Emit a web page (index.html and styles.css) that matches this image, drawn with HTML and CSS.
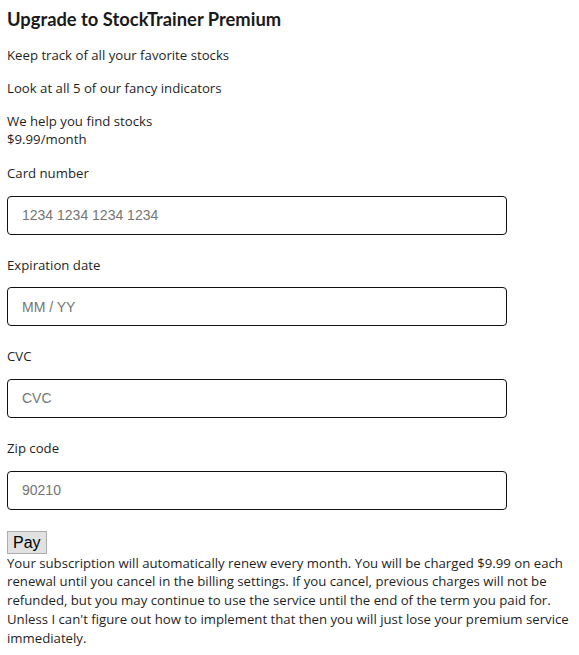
FILE: index.html
```html
<!DOCTYPE html>
<html lang="en">
<head>
<meta charset="utf-8">
<title>Upgrade to StockTrainer Premium</title>
<link rel="stylesheet" href="styles.css">
</head>
<body>
<h1 class="title">Upgrade to StockTrainer Premium</h1>
<p class="feature">Keep track of all your favorite stocks</p>
<p class="feature">Look at all 5 of our fancy indicators</p>
<p class="feature">We help you find stocks<br>$9.99/month</p>
<form class="pay-form">
  <div class="field">
    <label class="field-label" for="card">Card number</label>
    <input class="field-input" id="card" type="text" placeholder="1234 1234 1234 1234">
  </div>
  <div class="field">
    <label class="field-label" for="exp">Expiration date</label>
    <input class="field-input" id="exp" type="text" placeholder="MM / YY">
  </div>
  <div class="field">
    <label class="field-label" for="cvc">CVC</label>
    <input class="field-input" id="cvc" type="text" placeholder="CVC">
  </div>
  <div class="field">
    <label class="field-label" for="zip">Zip code</label>
    <input class="field-input" id="zip" type="text" placeholder="90210">
  </div>
  <div class="actions"><button class="pay-btn" type="button">Pay</button></div>
</form>
<div class="terms">Your subscription will automatically renew every month. You will be charged $9.99 on each renewal until you cancel in the billing settings. If you cancel, previous charges will not be refunded, but you may continue to use the service until the end of the term you paid for. Unless I can't figure out how to implement that then you will just lose your premium service immediately.</div>
</body>
</html>
```
FILE: styles.css
```css
html, body {
  background: #ffffff;
}
body {
  margin: 8px 8px 8px 7px;
  font-family: "Open Sans", "Noto Sans", sans-serif;
  font-size: 13.2px;
  line-height: 18.75px;
  color: #1f1f1f;
}
.title {
  font-family: Lato, "Liberation Sans", sans-serif;
  font-weight: 700;
  font-size: 18.35px;
  line-height: 22px;
  margin: 0 0 16px;
  color: #1a1a1a;
}
.feature {
  margin: 14px 0;
}
.pay-form {
  margin: 0;
  padding-top: 1px;
}
.field {
  display: flex;
  flex-direction: column;
  align-items: flex-start;
  margin-bottom: 21px;
}
.field-label {
  display: block;
  margin-bottom: 13px;
}
.field-input {
  box-sizing: border-box;
  width: 500px;
  height: 38.9px;
  margin: 0;
  padding: 0 14px;
  border: 1px solid #111;
  border-radius: 4px;
  font-family: "Liberation Sans", Arial, sans-serif;
  font-size: 14px;
  color: #222;
  background: #fff;
  outline: none;
}
.field-input::placeholder {
  color: #757575;
}
.actions {
  display: flex;
}
.pay-btn {
  font-family: "Liberation Sans", Arial, sans-serif;
  font-size: 16px;
  line-height: 19px;
  padding: 1px 5px;
  margin: 0;
  border: 1px solid #adadad;
  border-radius: 0;
  background: #e1e1e1;
  color: #000;
}
.terms {
  margin: 0;
}
```
